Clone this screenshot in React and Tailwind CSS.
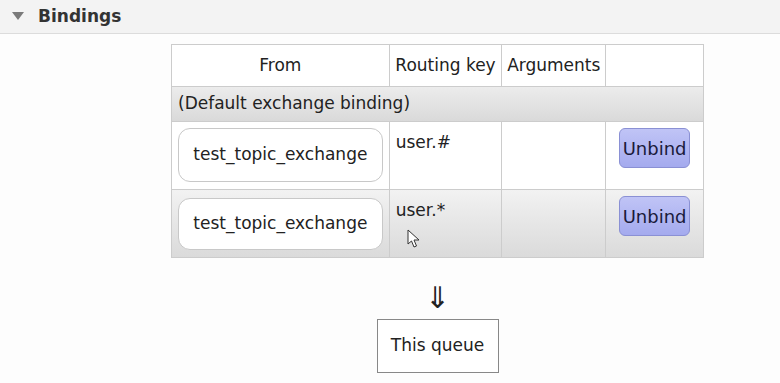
export default function App() {
  const font = { fontFamily: '"DejaVu Sans", Verdana, sans-serif' };
  return (
    <div className="w-[780px] h-[383px] bg-[#fdfdfd] overflow-hidden text-[#222]" style={font}>
      <div className="h-[34px] bg-[#f3f3f3] border-b border-[#dcdcdc] flex items-center pl-[12px] gap-[14px]">
        <svg width="12" height="8" viewBox="0 0 12 8" className="mt-[-2px]">
          <polygon points="0,0 12,0 6,8" fill="#7a7a7a" />
        </svg>
        <span className="text-[17px] font-bold text-[#333]">Bindings</span>
      </div>
      <div className="ml-[171px] mt-[10px] w-[533px] flex flex-col items-center">
        <div className="relative">
          <table className="border-collapse text-[17px] text-[#222]">
            <thead>
              <tr className="h-[42px] bg-white">
                <th className="w-[218px] border border-[#cccccc] font-normal text-center">From</th>
                <th className="w-[113px] border border-[#cccccc] font-normal text-center">Routing key</th>
                <th className="w-[104px] border border-[#cccccc] font-normal text-center">Arguments</th>
                <th className="w-[98px] border border-[#cccccc] font-normal"></th>
              </tr>
            </thead>
            <tbody>
              <tr className="h-[35px] bg-gradient-to-b from-[#ececec] to-[#d9d9d9]">
                <td colSpan={4} className="border border-[#cccccc] pl-[6px] text-left">(Default exchange binding)</td>
              </tr>
              <tr className="h-[68px] bg-white">
                <td className="border border-[#cccccc] align-top px-[6px] pt-[6px]">
                  <div className="h-[54px] rounded-[12px] border border-[#c8c8c8] bg-white flex items-center justify-center">test_topic_exchange</div>
                </td>
                <td className="border border-[#cccccc] align-top pl-[6px] pt-[8px]">user.#</td>
                <td className="border border-[#cccccc]"></td>
                <td className="border border-[#cccccc] align-top pt-[6px]">
                  <div className="flex justify-center">
                    <div className="w-[71px] h-[40px] rounded-[6px] border border-[#8a90d4] bg-gradient-to-b from-[#c0c4f6] to-[#a4aaee] flex items-center justify-center text-[18px] text-[#1a1a3a]">Unbind</div>
                  </div>
                </td>
              </tr>
              <tr className="h-[68px] bg-gradient-to-b from-[#f2f2f2] to-[#dadada]">
                <td className="border border-[#cccccc] align-top px-[6px] pt-[8px]">
                  <div className="h-[52px] rounded-[12px] border border-[#c8c8c8] bg-white flex items-center justify-center">test_topic_exchange</div>
                </td>
                <td className="border border-[#cccccc] align-top pl-[6px] pt-[8px]">user.*</td>
                <td className="border border-[#cccccc]"></td>
                <td className="border border-[#cccccc] align-top pt-[6px]">
                  <div className="flex justify-center">
                    <div className="w-[71px] h-[40px] rounded-[6px] border border-[#8a90d4] bg-gradient-to-b from-[#c0c4f6] to-[#a4aaee] flex items-center justify-center text-[18px] text-[#1a1a3a]">Unbind</div>
                  </div>
                </td>
              </tr>
            </tbody>
          </table>
          <svg className="absolute left-[236px] top-[185px]" width="14" height="20" viewBox="0 0 14 20">
            <path d="M1 1 L1 15 L4.5 12 L7 18 L9.5 17 L7 11 L12 11 Z" fill="#ffffff" stroke="#333" strokeWidth="1" strokeLinejoin="round" />
          </svg>
        </div>
        <div className="mt-[26px] text-[30px] leading-[28px] text-[#222]">⇓</div>
        <div className="mt-[7px] w-[122px] h-[54px] border border-[#888] bg-white flex items-center justify-center text-[17px]">This queue</div>
      </div>
    </div>
  );
}
